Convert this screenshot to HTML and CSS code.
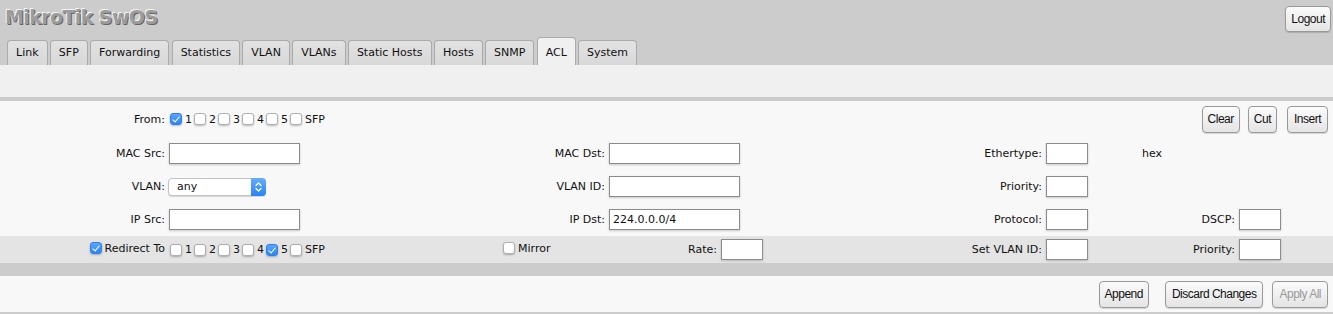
FILE: index.html
```html
<!DOCTYPE html>
<html lang="en">
<head>
  <meta charset="UTF-8">
  <title>MikroTik SwOS</title>
  <link rel="stylesheet" href="styles.css">
</head>
<body>
  <div class="header">
    <div class="brand">
      <div class="title">MikroTik SwOS</div>
      <ul class="tabs">
        <li><a href="#">Link</a></li>
        <li><a href="#">SFP</a></li>
        <li><a href="#">Forwarding</a></li>
        <li><a href="#">Statistics</a></li>
        <li><a href="#">VLAN</a></li>
        <li><a href="#">VLANs</a></li>
        <li><a href="#">Static Hosts</a></li>
        <li><a href="#">Hosts</a></li>
        <li><a href="#">SNMP</a></li>
        <li class="active"><a href="#">ACL</a></li>
        <li><a href="#">System</a></li>
      </ul>
    </div>
    <button class="btn logout">Logout</button>
  </div>
  <div class="subbar"></div>
  <div class="divider"></div>

  <div class="acl">
    <div class="row first">
      <div class="lbl">From:</div>
      <div class="val ports">
        <label class="cb"><input type="checkbox" checked>1</label>
        <label class="cb"><input type="checkbox">2</label>
        <label class="cb"><input type="checkbox">3</label>
        <label class="cb"><input type="checkbox">4</label>
        <label class="cb"><input type="checkbox">5</label>
        <label class="cb"><input type="checkbox">SFP</label>
      </div>
      <div class="tools">
        <button class="btn">Clear</button>
        <button class="btn">Cut</button>
        <button class="btn">Insert</button>
      </div>
    </div>

    <div class="row">
      <div class="lbl">MAC Src:</div>
      <div class="val"><input type="text" class="wide"></div>
      <div class="lbl">MAC Dst:</div>
      <div class="val"><input type="text" class="wide"></div>
      <div class="lbl">Ethertype:</div>
      <div class="val"><input type="text" class="short"></div>
      <div class="note">hex</div>
    </div>

    <div class="row">
      <div class="lbl">VLAN:</div>
      <div class="val">
        <div class="select-wrap">
          <select class="select"><option>any</option></select>
          <span class="select-arrow">
            <svg width="15" height="18" viewBox="0 0 15 18"><path d="M5 7.5 L7.5 5 L10 7.5 M5 10.5 L7.5 13 L10 10.5" fill="none" stroke="#fff" stroke-width="1.3" stroke-linecap="round" stroke-linejoin="round"/></svg>
          </span>
        </div>
      </div>
      <div class="lbl">VLAN ID:</div>
      <div class="val"><input type="text" class="wide"></div>
      <div class="lbl">Priority:</div>
      <div class="val"><input type="text" class="short"></div>
    </div>

    <div class="row">
      <div class="lbl">IP Src:</div>
      <div class="val"><input type="text" class="wide"></div>
      <div class="lbl">IP Dst:</div>
      <div class="val"><input type="text" class="wide" value="224.0.0.0/4"></div>
      <div class="lbl">Protocol:</div>
      <div class="val"><input type="text" class="short"></div>
      <div class="lbl">DSCP:</div>
      <div class="val"><input type="text" class="short"></div>
    </div>

    <div class="row redirect">
      <div class="lbl"><label class="cb"><input type="checkbox" checked>Redirect To</label></div>
      <div class="val ports">
        <label class="cb"><input type="checkbox">1</label>
        <label class="cb"><input type="checkbox">2</label>
        <label class="cb"><input type="checkbox">3</label>
        <label class="cb"><input type="checkbox">4</label>
        <label class="cb"><input type="checkbox" checked>5</label>
        <label class="cb"><input type="checkbox">SFP</label>
      </div>
      <div class="mirror"><label class="cb"><input type="checkbox">Mirror</label></div>
      <div class="rate">Rate:<input type="text" class="short"></div>
      <div class="lbl">Set VLAN ID:</div>
      <div class="val"><input type="text" class="short"></div>
      <div class="lbl">Priority:</div>
      <div class="val"><input type="text" class="short"></div>
    </div>
  </div>

  <div class="gap"></div>
  <div class="actions">
    <button class="btn append">Append</button>
    <button class="btn">Discard Changes</button>
    <button class="btn" disabled>Apply All</button>
  </div>
  <div class="divider thin"></div>
</body>
</html>
```

FILE: styles.css
```css
*{
  margin: 0;
  padding: 0;
  box-sizing: border-box;
}

body{
  background: #f8f8f8;
  font-family: "DejaVu Sans", Verdana, sans-serif;
  font-size: 11px;
  color: #111;
}

.header{
  height: 65px;
  background: #cccccc;
  display: flex;
  justify-content: space-between;
}

.brand{
  display: flex;
  flex-direction: column;
  justify-content: space-between;
  padding-left: 7px;
}

.title{
  font-size: 19px;
  font-weight: bold;
  letter-spacing: -0.6px;
  line-height: 22px;
  margin: 6px 0 0 -2px;
  color: #9c9c9c;
  text-shadow: -1px -1px 0 #f4f4f4, 1px 1px 0 #666;
}

.tabs{
  list-style: none;
  display: flex;
  align-items: flex-end;
  gap: 2.3px;
}

.tabs li{
  height: 25px;
  border: 1px solid #aaa;
  border-bottom: none;
  border-radius: 4px 4px 0 0;
  background: linear-gradient(#e2e2e2, #d8d8d8);
}

.tabs a{
  display: block;
  padding: 0 8px;
  line-height: 24px;
  color: #111;
  text-decoration: none;
}

.tabs li.active{
  height: 28px;
  padding-top: 3px;
  background: #f0f0f0;
}

.subbar{
  height: 32px;
  background: #f0f0f0;
}

.divider{
  height: 4px;
  background: #cccccc;
}

.divider.thin{
  height: 2px;
}

.btn{
  font-family: "Liberation Sans", Arial, sans-serif;
  font-size: 12px;
  letter-spacing: -0.5px;
  color: #111;
  height: 27px;
  padding: 0 6px;
  border: 1px solid #999;
  border-radius: 4px;
  background: linear-gradient(#fbfbfb, #e4e4e4);
  box-shadow: 0 1px 1px rgba(0,0,0,0.15);
}

.btn:disabled{
  color: #999;
}

.logout{
  height: 26px;
  margin: 6px 2px 0 0;
  padding: 0 5px;
}

.row{
  display: grid;
  grid-template-columns: 169px 271px 169px 271px 166px 96px 97px 1fr;
  align-items: center;
  height: 33px;
}

.row.first{
  height: 36px;
}

.row.redirect{
  height: 27px;
  background: #e4e4e4;
}

.lbl{
  text-align: right;
  padding-right: 4px;
  white-space: nowrap;
}

.val{
  display: flex;
  align-items: center;
}

.ports{
  padding-left: 1px;
}

.cb{
  display: inline-flex;
  align-items: center;
  margin-right: 2px;
}

.cb input{
  appearance: none;
  -webkit-appearance: none;
  width: 12px;
  height: 12px;
  margin-right: 3px;
  border: 1px solid #b0b0b0;
  border-radius: 3px;
  background: #fff;
  box-shadow: 0 1px 2px rgba(0,0,0,0.25);
  position: relative;
}

.cb input:checked{
  border-color: #2f7fe8;
  background: linear-gradient(#5aa6fb, #2d86f4);
}

.cb input:checked::after{
  content: "";
  position: absolute;
  left: 3px;
  top: 1px;
  width: 3px;
  height: 6px;
  border: solid #fff;
  border-width: 0 1.5px 1.5px 0;
  transform: rotate(40deg);
}

.lbl .cb{
  margin-right: 0;
}

input[type="text"]{
  height: 21px;
  border: 1px solid #8c8c8c;
  background: #fff;
  box-shadow: 0 1px 2px rgba(0,0,0,0.2);
  padding: 0 3px;
  font-family: "DejaVu Sans", Verdana, sans-serif;
  font-size: 11px;
  color: #111;
}

input.wide{
  width: 131px;
}

input.short{
  width: 42px;
}

.select-wrap{
  position: relative;
  width: 98px;
  height: 18px;
  margin-left: -1px;
}

.select{
  appearance: none;
  -webkit-appearance: none;
  width: 98px;
  height: 18px;
  border: 1px solid #c4c4c4;
  border-radius: 4px;
  background: #fff;
  box-shadow: 0 1px 1px rgba(0,0,0,0.15);
  padding-left: 8px;
  font-family: "DejaVu Sans", Verdana, sans-serif;
  font-size: 11px;
  color: #111;
}

.select-arrow{
  position: absolute;
  right: 0;
  top: 0;
  width: 15px;
  height: 18px;
  border-radius: 0 4px 4px 0;
  background: linear-gradient(#64adfb, #2a83f3);
  pointer-events: none;
}

.select-arrow svg{
  display: block;
}

.tools{
  grid-column: 6 / -1;
  display: flex;
  justify-content: flex-end;
  gap: 8px;
  padding-right: 5px;
}

.tools .btn{
  padding: 0 5px;
}

.tools .btn:last-child{
  margin-left: 2px;
  padding: 0 6px;
}

.mirror{
  padding-left: 63px;
}

.rate{
  display: flex;
  align-items: center;
  gap: 4px;
  padding-left: 79px;
}

.gap{
  height: 13px;
  background: #cccccc;
}

.actions{
  height: 36px;
  display: flex;
  justify-content: flex-end;
  align-items: center;
  gap: 9px;
  padding-right: 5px;
}

.actions .append{
  margin-right: 7px;
  padding: 0 5px;
}
```
